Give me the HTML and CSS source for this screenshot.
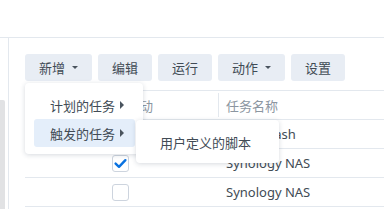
FILE: index.html
```html
<!DOCTYPE html>
<html>
<head>
<meta charset="utf-8">
<link rel="stylesheet" href="styles.css">
</head>
<body>
<div class="topbar"></div>
<div class="main">
  <div class="side"><div class="sidebar-bar"></div></div>
  <div class="content">
    <div class="toolbar">
      <div class="btn-wrap">
        <button class="btn">新增<span class="caret"></span></button>
        <div class="menu">
          <div class="menu-item">计划的任务<span class="arrow"></span></div>
          <div class="menu-item active">触发的任务<span class="arrow"></span></div>
        </div>
        <div class="submenu">
          <div class="sub-item">用户定义的脚本</div>
        </div>
      </div>
      <button class="btn">编辑</button>
      <button class="btn">运行</button>
      <button class="btn">动作<span class="caret"></span></button>
      <button class="btn">设置</button>
    </div>
    <div class="table">
      <div class="row head">
        <div class="cell c1"></div>
        <div class="cell c2">已启动</div>
        <div class="cell c3 sep">任务名称</div>
      </div>
      <div class="row">
        <div class="cell c1"></div>
        <div class="cell c2"><span class="check"></span></div>
        <div class="cell c3">Auto_ Flash</div>
      </div>
      <div class="row">
        <div class="cell c1"></div>
        <div class="cell c2"><span class="check on"><svg viewBox="0 0 17 17" width="17" height="17"><path d="M3.6 8.6 L7 11.8 L13.4 5.2" fill="none" stroke="#0a72e0" stroke-width="2.4" stroke-linecap="round" stroke-linejoin="round"/></svg></span></div>
        <div class="cell c3">Synology NAS</div>
      </div>
      <div class="row">
        <div class="cell c1"></div>
        <div class="cell c2"><span class="check"></span></div>
        <div class="cell c3">Synology NAS</div>
      </div>
    </div>
  </div>
</div>
</body>
</html>
```
FILE: styles.css
```css
html, body {
  margin: 0;
  padding: 0;
  background: #ffffff;
  overflow: hidden;
}
body {
  width: 384px;
  height: 209px;
  font-family: "Noto Sans", "Noto Sans CJK SC", sans-serif;
  font-size: 13px;
  color: #414b55;
}
.topbar {
  height: 37px;
  border-bottom: 1px solid #e3e8ee;
}
.main {
  display: flex;
  height: 171px;
  overflow: hidden;
}
.side {
  width: 8px;
  border-right: 1px solid #e3e8ee;
  padding-top: 62px;
  box-sizing: content-box;
}
.sidebar-bar {
  width: 5px;
  height: 109px;
  background: #e1e2e4;
  border-radius: 0 2px 0 0;
}
.content {
  flex: 1;
  padding-left: 16px;
  padding-top: 16px;
}
.toolbar {
  display: flex;
  gap: 6px;
  height: 27px;
  margin-bottom: 9px;
}
.btn-wrap {
  position: relative;
  display: flex;
}
.btn {
  height: 27px;
  padding: 0 14px;
  border: none;
  border-radius: 3px;
  background: #e8edf4;
  font-family: "Noto Sans CJK SC", sans-serif;
  font-size: 13px;
  color: #414b55;
  display: flex;
  align-items: center;
  line-height: 1;
}
.caret {
  width: 0;
  height: 0;
  border-left: 3px solid transparent;
  border-right: 3px solid transparent;
  border-top: 3px solid #4a545e;
  margin-left: 7px;
}
.menu {
  position: absolute;
  left: 0;
  top: 29px;
  width: 118px;
  box-sizing: border-box;
  padding: 8px 8px 7px 9px;
  background: #ffffff;
  border-radius: 4px;
  box-shadow: 0 1px 5px rgba(30, 45, 70, 0.18);
  z-index: 5;
}
.menu-item {
  height: 28px;
  display: flex;
  align-items: center;
  justify-content: space-between;
  padding: 0 11px 0 16px;
  border-radius: 3px;
  font-family: "Noto Sans CJK SC", sans-serif;
}
.menu-item.active {
  background: #e4eefa;
}
.arrow {
  width: 0;
  height: 0;
  border-top: 4px solid transparent;
  border-bottom: 4px solid transparent;
  border-left: 4px solid #4a545e;
}
.submenu {
  position: absolute;
  left: 111px;
  top: 66px;
  width: 143px;
  box-sizing: border-box;
  padding: 8px 0 7px;
  background: #ffffff;
  border-radius: 4px;
  box-shadow: 0 1px 5px rgba(30, 45, 70, 0.18);
  z-index: 6;
}
.sub-item {
  height: 28px;
  display: flex;
  align-items: center;
  padding-left: 24px;
  font-family: "Noto Sans CJK SC", sans-serif;
}
.table {
  border-top: 1px solid #e3e8ee;
}
.row {
  display: flex;
  height: 28px;
  border-bottom: 1px solid #e3e8ee;
}
.cell {
  display: flex;
  align-items: center;
  box-sizing: border-box;
  padding-left: 8px;
}
.c1 { width: 79px; }
.c2 { width: 114px; }
.c3 { flex: 1; }
.head .cell {
  color: #8c96a1;
  font-family: "Noto Sans CJK SC", sans-serif;
}
.head .c2 { padding-left: 10px; }
.sep {
  position: relative;
}
.sep::before {
  content: "";
  position: absolute;
  left: 0;
  top: 2px;
  bottom: 2px;
  border-left: 1px solid #e3e8ee;
}
.check {
  width: 17px;
  height: 17px;
  box-sizing: border-box;
  border: 1px solid #cdd4de;
  border-radius: 3px;
  background: #fff;
  display: block;
  position: relative;
}
.check svg {
  position: absolute;
  left: -1px;
  top: -1px;
}
```
